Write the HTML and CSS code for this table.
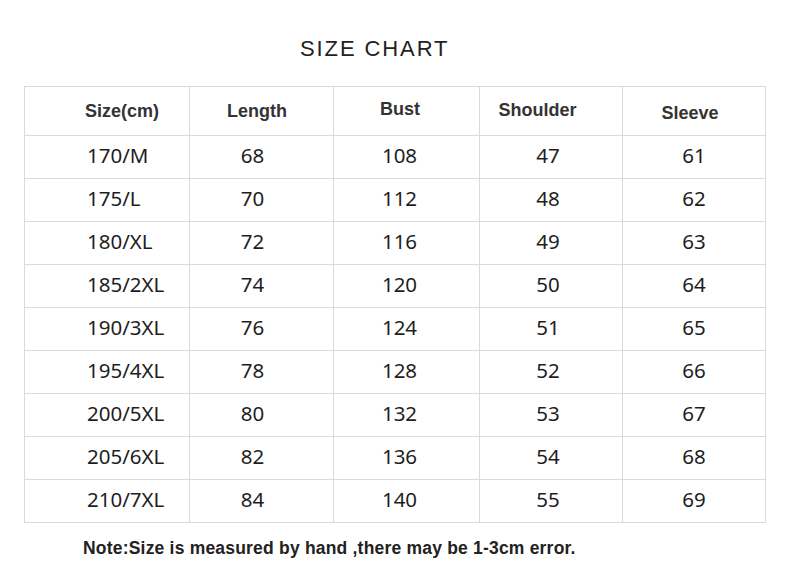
FILE: index.html
```html
<!DOCTYPE html>
<html>
<head>
<meta charset="utf-8">
<link rel="stylesheet" href="styles.css">
</head>
<body>
<div class="page">
  <h1 class="title">SIZE CHART</h1>
  <table class="chart">
    <thead>
      <tr>
        <th class="c1">Size(cm)</th>
        <th class="c2">Length</th>
        <th class="c3">Bust</th>
        <th class="c4">Shoulder</th>
        <th class="c5">Sleeve</th>
      </tr>
    </thead>
    <tbody>
      <tr><td class="c1">170/M</td><td class="c2">68</td><td class="c3">108</td><td class="c4">47</td><td class="c5">61</td></tr>
      <tr><td class="c1">175/L</td><td class="c2">70</td><td class="c3">112</td><td class="c4">48</td><td class="c5">62</td></tr>
      <tr><td class="c1">180/XL</td><td class="c2">72</td><td class="c3">116</td><td class="c4">49</td><td class="c5">63</td></tr>
      <tr><td class="c1">185/2XL</td><td class="c2">74</td><td class="c3">120</td><td class="c4">50</td><td class="c5">64</td></tr>
      <tr><td class="c1">190/3XL</td><td class="c2">76</td><td class="c3">124</td><td class="c4">51</td><td class="c5">65</td></tr>
      <tr><td class="c1">195/4XL</td><td class="c2">78</td><td class="c3">128</td><td class="c4">52</td><td class="c5">66</td></tr>
      <tr><td class="c1">200/5XL</td><td class="c2">80</td><td class="c3">132</td><td class="c4">53</td><td class="c5">67</td></tr>
      <tr><td class="c1">205/6XL</td><td class="c2">82</td><td class="c3">136</td><td class="c4">54</td><td class="c5">68</td></tr>
      <tr><td class="c1">210/7XL</td><td class="c2">84</td><td class="c3">140</td><td class="c4">55</td><td class="c5">69</td></tr>
    </tbody>
  </table>
  <p class="note">Note:Size is measured by hand ,there may be 1-3cm error.</p>
</div>
</body>
</html>
```

FILE: styles.css
```css
html, body {
  margin: 0;
  padding: 0;
  background: #ffffff;
}

.page {
  width: 790px;
  height: 587px;
  padding-top: 35px;
  box-sizing: border-box;
}

.title {
  margin: 0;
  padding-left: 300px;
  height: 51px;
  line-height: 28px;
  font-family: "Liberation Sans", Arial, sans-serif;
  font-weight: normal;
  font-size: 22px;
  letter-spacing: 1.9px;
  color: #222222;
}

.chart {
  margin-left: 24px;
  width: 741px;
  border-collapse: collapse;
  table-layout: fixed;
}

.chart th,
.chart td {
  box-sizing: border-box;
  border: 1px solid #dadada;
  padding: 0;
}

.chart th {
  height: 49px;
  font-family: "Liberation Sans", Arial, sans-serif;
  font-weight: bold;
  font-size: 18px;
  color: #333333;
  text-align: center;
  vertical-align: middle;
}

.chart td {
  height: 43px;
  padding-bottom: 4px;
  font-family: "Noto Sans", "Open Sans", sans-serif;
  font-size: 20.5px;
  color: #1e1e1e;
  text-align: center;
  vertical-align: middle;
}

.chart .c1 { width: 165px; text-align: left; }
.chart .c2 { width: 144px; }
.chart .c3 { width: 146px; }
.chart .c4 { width: 143px; }
.chart .c5 { width: 143px; }

.chart th.c1 { padding-left: 60px; }
.chart th.c2 { padding-right: 9px; }
.chart th.c3 { padding-right: 13px; padding-bottom: 4px; }
.chart th.c4 { padding-right: 27px; padding-bottom: 2px; }
.chart th.c5 { padding-right: 8px; padding-top: 4px; }

.chart td.c1 { padding-left: 62px; }
.chart td.c2 { padding-right: 18px; }
.chart td.c3 { padding-right: 14px; }
.chart td.c4 { padding-right: 6px; }
.chart td.c5 { padding-right: 0; }

.note {
  margin: 15px 0 0 83px;
  font-family: "Liberation Sans", Arial, sans-serif;
  font-weight: bold;
  font-size: 17.5px;
  letter-spacing: 0.2px;
  color: #222222;
}
```
